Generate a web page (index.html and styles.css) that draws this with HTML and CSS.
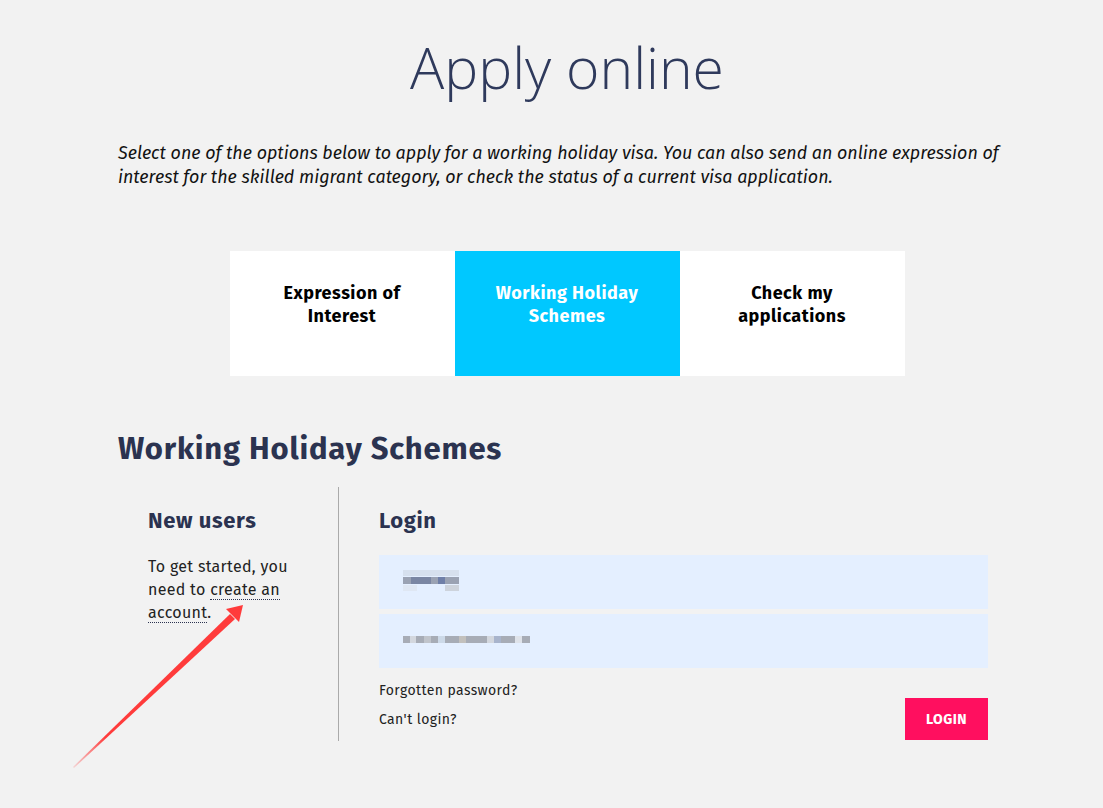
FILE: index.html
```html
<!DOCTYPE html>
<html lang="en">
<head>
    <meta charset="UTF-8">
    <meta name="viewport" content="width=device-width, initial-scale=1.0">
    <title>Apply online</title>
    <link rel="stylesheet" href="styles.css">
</head>
<body>
<div class="page">
    <h1 class="title">Apply online</h1>
    <p class="intro">Select one of the options below to apply for a working holiday visa. You can also send an online expression of interest for the skilled migrant category, or check the status of a current visa application.</p>

    <div class="tabs">
        <a class="tab" href="#">Expression of<br>Interest</a>
        <a class="tab active" href="#">Working Holiday<br>Schemes</a>
        <a class="tab" href="#">Check my<br>applications</a>
    </div>

    <h2 class="section-title">Working Holiday Schemes</h2>

    <div class="columns">
        <div class="col-new">
            <h3>New users</h3>
            <p>To get started, you need to <a href="#" class="dotted">create an account</a>.</p>
        </div>
        <div class="col-login">
            <h3>Login</h3>
            <form class="login-form">
                <div class="field">
                    <svg class="blur" width="60" height="24" viewBox="0 0 60 24">
                        <rect x="0" y="0" width="56" height="6" fill="#d6e0ee"/>
                        <rect x="0" y="7" width="56" height="7" fill="#9aa2b3"/>
                        <rect x="8" y="7" width="20" height="7" fill="#7a86a3"/>
                        <rect x="35" y="7" width="7" height="7" fill="#6f7fa8"/>
                        <rect x="0" y="15" width="14" height="6" fill="#dfe7f3"/>
                        <rect x="42" y="15" width="14" height="6" fill="#cdd3dc"/>
                    </svg>
                </div>
                <div class="field">
                    <svg class="blur" width="130" height="10" viewBox="0 0 130 10">
                        <rect x="0" y="0" width="127" height="7" fill="#a7acb6"/>
                        <rect x="7" y="0" width="6" height="7" fill="#d3d7de"/>
                        <rect x="21" y="0" width="7" height="7" fill="#c0c4cb"/>
                        <rect x="35" y="0" width="7" height="7" fill="#ccd9e8"/>
                        <rect x="56" y="0" width="7" height="7" fill="#c2c0bd"/>
                        <rect x="84" y="0" width="7" height="7" fill="#d3d7de"/>
                        <rect x="91" y="0" width="7" height="7" fill="#a8b4cc"/>
                        <rect x="112" y="0" width="7" height="7" fill="#dfe3ea"/>
                    </svg>
                </div>
                <div class="form-bottom">
                    <div class="links">
                        <a href="#">Forgotten password?</a>
                        <a href="#">Can't login?</a>
                    </div>
                    <button type="button">LOGIN</button>
                </div>
            </form>
        </div>
    </div>
</div>

<svg class="arrow" width="200" height="190" viewBox="0 0 200 190">
    <defs>
        <linearGradient id="fade" x1="0" y1="1" x2="1" y2="0">
            <stop offset="0" stop-color="#ff4040" stop-opacity="0.15"/>
            <stop offset="0.2" stop-color="#ff3b3b"/>
            <stop offset="1" stop-color="#ff3b3b"/>
        </linearGradient>
    </defs>
    <polygon points="13,177 170,24 175,29 14,178" fill="url(#fade)"/>
    <polygon points="183,15 166,19 179,32" fill="#ff3b3b"/>
</svg>
</body>
</html>
```

FILE: styles.css
```css
body {
    margin: 0;
    padding: 0;
    background-color: #f2f2f2;
    font-family: "Fira Sans", Roboto, sans-serif;
    color: #2b3350;
}
.page {
    width: 898px;
    margin-left: 118px;
    padding-top: 29px;
    padding-bottom: 40px;
}
.title {
    margin: 0;
    text-align: center;
    font-family: "Open Sans", sans-serif;
    font-weight: 300;
    font-size: 57px;
    line-height: 76px;
    color: #2f3a5c;
}
.intro {
    margin: 36px 0 0 0;
    font-style: italic;
    font-size: 17.9px;
    line-height: 24px;
    color: #111;
}
.tabs {
    display: flex;
    justify-content: center;
    margin-top: 62px;
}
.tab {
    width: 225px;
    height: 125px;
    box-sizing: border-box;
    padding-top: 31px;
    background: white;
    color: #000;
    text-align: center;
    font-weight: bold;
    font-size: 18px;
    line-height: 23px;
    letter-spacing: 0.5px;
    text-decoration: none;
}
.tab.active {
    background: #00c8ff;
    color: white;
}
.section-title {
    margin: 53px 0 0 0;
    font-size: 31px;
    line-height: 40px;
    font-weight: bold;
    letter-spacing: 0.8px;
    color: #2b3350;
}
.columns {
    display: flex;
    margin-top: 18px;
}
.col-new {
    width: 221px;
    box-sizing: border-box;
    padding: 20px 30px 0 30px;
    border-right: 1px solid #aaa;
    min-height: 254px;
}
.col-login {
    width: 649px;
    box-sizing: border-box;
    padding: 20px 0 0 40px;
}
h3 {
    margin: 0;
    font-size: 22px;
    line-height: 28px;
    font-weight: bold;
    letter-spacing: 0.6px;
    color: #2b3350;
}
.col-new p {
    margin: 20px 0 0 0;
    font-size: 16px;
    line-height: 23px;
    letter-spacing: 0.3px;
    color: #222;
}
.dotted {
    color: #222;
    text-decoration: none;
    border-bottom: 1px dotted #2b3350;
}
.login-form {
    margin-top: 20px;
}
.field {
    height: 54px;
    background: #e4efff;
    margin-bottom: 5px;
    display: flex;
    align-items: center;
    padding-left: 24px;
}
.form-bottom {
    display: flex;
    justify-content: space-between;
    margin-top: 14px;
}
.links {
    display: flex;
    flex-direction: column;
    gap: 12px;
}
.links a {
    font-size: 14px;
    line-height: 17px;
    letter-spacing: 0.4px;
    color: #222;
    text-decoration: none;
}
.form-bottom button {
    margin-top: 16px;
    width: 83px;
    height: 42px;
    border: none;
    background: #ff0f5f;
    color: white;
    font-family: "Fira Sans", Roboto, sans-serif;
    font-weight: bold;
    font-size: 14px;
    letter-spacing: 0.5px;
    cursor: pointer;
}
.arrow {
    position: absolute;
    left: 60px;
    top: 590px;
}
```
